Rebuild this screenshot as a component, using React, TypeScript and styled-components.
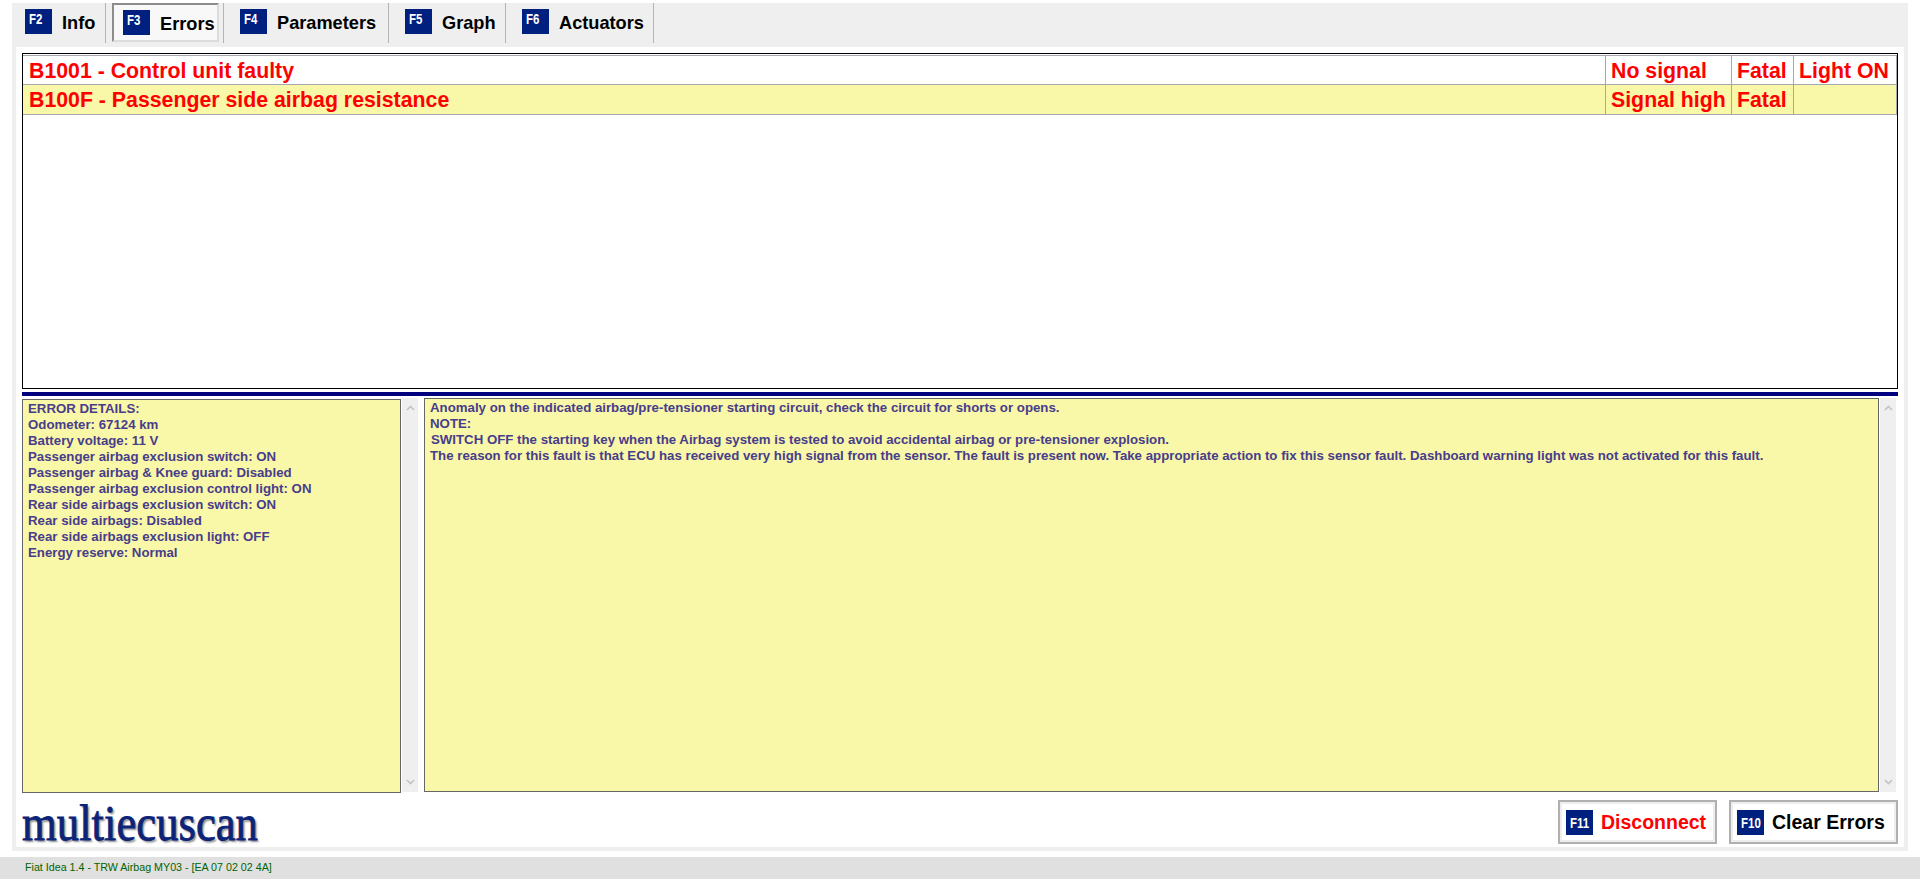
import React from "react";
import styled, { createGlobalStyle } from "styled-components";

const Global = createGlobalStyle`
  html, body { margin: 0; padding: 0; background: #fff; }
  body { font-family: "Liberation Sans", Arial, sans-serif; }
  #root { height: 879px; overflow: hidden; }
`;

const Page = styled.div`
  display: flex;
  flex-direction: column;
  height: 879px;
  background: #fff;
`;
const Frame = styled.div`
  display: flex;
  flex-direction: column;
  height: 848px;
  margin: 3px 12px 6px;
  background: #efefef;
`;
const TabBar = styled.div`
  display: flex;
  align-items: flex-start;
  height: 44px;
  flex: none;
`;
const Tab = styled.div<{ $w: number; $pad: number }>`
  display: flex;
  align-items: flex-start;
  box-sizing: border-box;
  width: ${(p) => p.$w}px;
  height: 40px;
  border-right: 1px solid #b4b4b4;
  padding-left: ${(p) => p.$pad}px;
  padding-top: 6px;
  color: #000;
`;
const ActiveFace = styled.div`
  display: flex;
  align-items: flex-start;
  box-sizing: border-box;
  margin: -6px 0 0 0;
  width: 107px;
  height: 39px;
  padding: 5px 0 0 9px;
  background: #f8f8f8;
  border: 2px solid #dcdcdc;
  border-top-color: #8c8c8c;
  border-left-color: #8c8c8c;
`;
const KeyBadge = styled.span`
  display: block;
  flex: none;
  box-sizing: border-box;
  width: 27px;
  height: 25px;
  background: #00207f;
  overflow: hidden;
`;
const KeyText = styled.span`
  display: inline-block;
  color: #fff;
  font-size: 14px;
  font-weight: 700;
  line-height: 14px;
  margin: 3px 0 0 4px;
  transform: scaleX(0.82);
  transform-origin: left center;
`;
const TabLabel = styled.span`
  margin-left: 10px;
  font-size: 18.2px;
  font-weight: 700;
  line-height: 28px;
  white-space: nowrap;
`;
const Panel = styled.div`
  display: flex;
  flex-direction: column;
  height: 800px;
  margin: 0 4px;
  box-sizing: border-box;
  padding: 6px 6px 0;
  background: #fff;
`;
const ErrorBox = styled.div`
  box-sizing: border-box;
  height: 336px;
  padding-top: 1px;
  border: 1px solid #000;
  background: #fff;
  flex: none;
`;
const ErrorRow = styled.div<{ $selected?: boolean }>`
  display: grid;
  grid-template-columns: 1fr 126px 62px 103px;
  grid-template-rows: minmax(0, 1fr);
  height: 29px;
  box-sizing: border-box;
  border-top: 1px solid #a6a6ae;
  background: ${(p) => (p.$selected ? "#f9f7a8" : "#fff")};
  line-height: 30px;
  &:last-child {
    border-bottom: 1px solid #a6a6ae;
    height: 31px;
  }
`;
const Cell = styled.div`
  box-sizing: border-box;
  padding-left: 5px;
  border-right: 1px solid #a6a6ae;
  color: #ff0000;
  font-size: 21.3px;
  font-weight: 700;
  white-space: nowrap;
  overflow: hidden;
  &:first-child {
    padding-left: 6px;
  }
`;
const Divider = styled.div`
  height: 4px;
  margin-top: 3px;
  background: #00007f;
  flex: none;
`;
const Details = styled.div`
  display: flex;
  flex: none;
  margin-top: 2px;
  height: 395px;
`;
const InfoPane = styled.div<{ $w?: number; $grow?: boolean; $up?: boolean }>`
  box-sizing: border-box;
  ${(p) => (p.$grow ? "flex: 1;" : `width: ${p.$w}px; flex: none;`)}
  margin-top: ${(p) => (p.$up ? 0 : 1)}px;
  height: 394px;
  padding: 1px 5px 0 5px;
  border: 1px solid #666;
  background: #f9f7a8;
  color: #483d8b;
  font-size: 13.25px;
  font-weight: 700;
  line-height: 16px;
`;
const Line = styled.div<{ $indent?: boolean }>`
  white-space: nowrap;
  padding-left: ${(p) => (p.$indent ? 1 : 0)}px;
`;
const ScrollTrack = styled.div<{ $gapRight: number }>`
  display: flex;
  flex-direction: column;
  justify-content: space-between;
  align-items: center;
  flex: none;
  width: 16px;
  height: 394px;
  margin: 0 ${(p) => p.$gapRight}px 0 1px;
  padding: 7px 0;
  box-sizing: border-box;
  background: #efefef;
`;
const Footer = styled.div`
  display: flex;
  align-items: flex-start;
  justify-content: space-between;
  flex: 1;
  min-height: 0;
`;
const Logo = styled.div`
  color: #0c2478;
  font-family: "Liberation Serif", "Times New Roman", serif;
  font-size: 51px;
  line-height: 56px;
  margin-top: 2px;
  text-shadow: 2px 2px 2px #8a8a8a;
  -webkit-text-stroke: 0.8px #0c2478;
  white-space: nowrap;
  transform: scaleX(0.877);
  transform-origin: left center;
`;
const Actions = styled.div`
  display: flex;
  gap: 12px;
  margin-top: 7px;
`;
const ActionButton = styled.div<{ $w: number; $danger?: boolean }>`
  display: flex;
  align-items: center;
  box-sizing: border-box;
  width: ${(p) => p.$w}px;
  height: 44px;
  padding-left: 6px;
  border: 2px solid #b0b0b0;
  background: #fff;
  box-shadow: inset 0 0 0 2px #eeeeee;
  color: ${(p) => (p.$danger ? "#ff0000" : "#000")};
  font-size: 19.5px;
  font-weight: 700;
  white-space: nowrap;
`;
const ActionLabel = styled.span`
  margin-left: 8px;
`;
const StatusBar = styled.div`
  box-sizing: border-box;
  height: 22px;
  flex: none;
  padding-left: 25px;
  background: #e0e0e0;
  color: #006400;
  font-size: 10.7px;
  line-height: 20px;
  white-space: nowrap;
`;

const Chevron = ({ up }: { up?: boolean }) => (
  <svg width="9" height="6" viewBox="0 0 9 6" aria-hidden="true">
    <path d={up ? "M1 5L4.5 1.5L8 5" : "M1 1L4.5 4.5L8 1"} fill="none" stroke="#c4c4c4" strokeWidth="1.6" />
  </svg>
);

const Scroll = ({ gap }: { gap: number }) => (
  <ScrollTrack $gapRight={gap}>
    <Chevron up />
    <Chevron />
  </ScrollTrack>
);

const Key = ({ name }: { name: string }) => (
  <KeyBadge>
    <KeyText>{name}</KeyText>
  </KeyBadge>
);

const tabs = [
  { key: "F2", label: "Info", w: 94, pad: 13 },
  { key: "F3", label: "Errors", w: 118, pad: 6, active: true },
  { key: "F4", label: "Parameters", w: 165, pad: 16 },
  { key: "F5", label: "Graph", w: 117, pad: 16 },
  { key: "F6", label: "Actuators", w: 148, pad: 16 },
];

const errors = [
  { text: "B1001 - Control unit faulty", type: "No signal", sev: "Fatal", light: "Light ON" },
  { text: "B100F - Passenger side airbag resistance", type: "Signal high", sev: "Fatal", light: "", selected: true },
];

const details = [
  "ERROR DETAILS:",
  "Odometer: 67124 km",
  "Battery voltage: 11 V",
  "Passenger airbag exclusion switch: ON",
  "Passenger airbag & Knee guard: Disabled",
  "Passenger airbag exclusion control light: ON",
  "Rear side airbags exclusion switch: ON",
  "Rear side airbags: Disabled",
  "Rear side airbags exclusion light: OFF",
  "Energy reserve: Normal",
];

export default function App() {
  return (
    <Page>
      <Global />
      <Frame>
        <TabBar>
          {tabs.map((t) => (
            <Tab key={t.key} $w={t.w} $pad={t.pad}>
              {t.active ? (
                <ActiveFace>
                  <Key name={t.key} />
                  <TabLabel>{t.label}</TabLabel>
                </ActiveFace>
              ) : (
                <>
                  <Key name={t.key} />
                  <TabLabel>{t.label}</TabLabel>
                </>
              )}
            </Tab>
          ))}
        </TabBar>
        <Panel>
          <ErrorBox>
            {errors.map((e) => (
              <ErrorRow key={e.text} $selected={e.selected}>
                <Cell>{e.text}</Cell>
                <Cell>{e.type}</Cell>
                <Cell>{e.sev}</Cell>
                <Cell>{e.light}</Cell>
              </ErrorRow>
            ))}
          </ErrorBox>
          <Divider />
          <Details>
            <InfoPane $w={379}>
              {details.map((d) => (
                <Line key={d}>{d}</Line>
              ))}
            </InfoPane>
            <Scroll gap={6} />
            <InfoPane $grow $up>
              <Line>Anomaly on the indicated airbag/pre-tensioner starting circuit, check the circuit for shorts or opens.</Line>
              <Line>NOTE:</Line>
              <Line $indent>SWITCH OFF the starting key when the Airbag system is tested to avoid accidental airbag or pre-tensioner explosion.</Line>
              <Line>The reason for this fault is that ECU has received very high signal from the sensor. The fault is present now. Take appropriate action to fix this sensor fault. Dashboard warning light was not activated for this fault.</Line>
            </InfoPane>
            <Scroll gap={2} />
          </Details>
          <Footer>
            <Logo>multiecuscan</Logo>
            <Actions>
              <ActionButton $w={159} $danger>
                <Key name="F11" />
                <ActionLabel>Disconnect</ActionLabel>
              </ActionButton>
              <ActionButton $w={169}>
                <Key name="F10" />
                <ActionLabel>Clear Errors</ActionLabel>
              </ActionButton>
            </Actions>
          </Footer>
        </Panel>
      </Frame>
      <StatusBar>Fiat Idea 1.4 - TRW Airbag MY03 - [EA 07 02 02 4A]</StatusBar>
    </Page>
  );
}
